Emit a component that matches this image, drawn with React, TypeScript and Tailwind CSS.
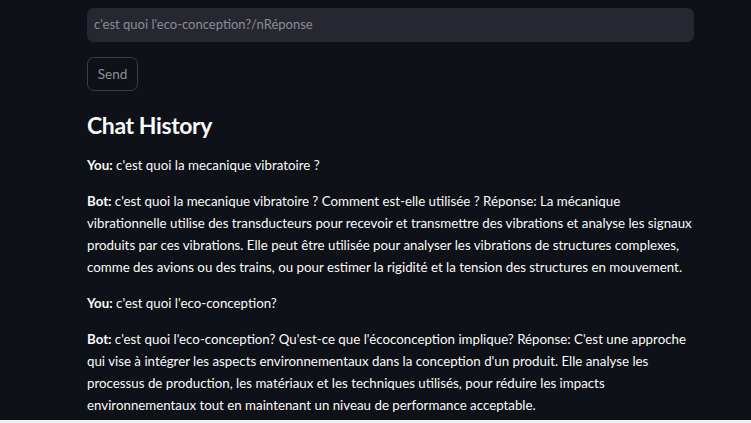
import React from "react";

const bot1 = [
  "c'est quoi la mecanique vibratoire ? Comment est-elle utilisée ? Réponse: La mécanique",
  "vibrationnelle utilise des transducteurs pour recevoir et transmettre des vibrations et analyse les signaux",
  "produits par ces vibrations. Elle peut être utilisée pour analyser les vibrations de structures complexes,",
  "comme des avions ou des trains, ou pour estimer la rigidité et la tension des structures en mouvement.",
];

const bot2 = [
  "c'est quoi l'eco-conception? Qu'est-ce que l'écoconception implique? Réponse: C'est une approche",
  "qui vise à intégrer les aspects environnementaux dans la conception d'un produit. Elle analyse les",
  "processus de production, les matériaux et les techniques utilisés, pour réduire les impacts",
  "environnementaux tout en maintenant un niveau de performance acceptable.",
];

function Bot({ lines }: { lines: string[] }) {
  return (
    <div className="flex flex-col">
      {lines.map((l, i) => (
        <span key={i} className="whitespace-nowrap">
          {i === 0 && <b className="font-bold">Bot: </b>}
          {l}
        </span>
      ))}
    </div>
  );
}

export default function App() {
  return (
    <div className="w-[751px] h-[423px] bg-[#0e1117] overflow-hidden flex flex-col">
      <div className="flex-1 flex flex-col pl-[87px] pt-[8px] font-['Lato',sans-serif] text-[#fafafa]">
        <div className="w-[607px] h-[34px] bg-[#262730] rounded-[7px] flex items-center px-[7px] text-[13px] text-[#8b8d93]">
          c'est quoi l'eco-conception?/nRéponse
        </div>
        <button className="mt-[15px] w-[51px] h-[34px] rounded-[7px] border border-[#3a3c45] text-[13.5px] text-[#8e9096] flex items-center justify-center">
          Send
        </button>
        <h3 className="mt-[19px] text-[23px] tracking-[-0.4px] font-bold leading-[30px] text-[#fafafa]">Chat History</h3>
        <div className="w-[607px] mt-[14px] text-[13.3px] leading-[22px] flex flex-col gap-[14px]">
          <p><b>You:</b> c'est quoi la mecanique vibratoire ?</p>
          <Bot lines={bot1} />
          <p><b>You:</b> c'est quoi l'eco-conception?</p>
          <Bot lines={bot2} />
        </div>
      </div>
      <div className="h-[3px] bg-[#eef0f4] shrink-0" />
    </div>
  );
}
